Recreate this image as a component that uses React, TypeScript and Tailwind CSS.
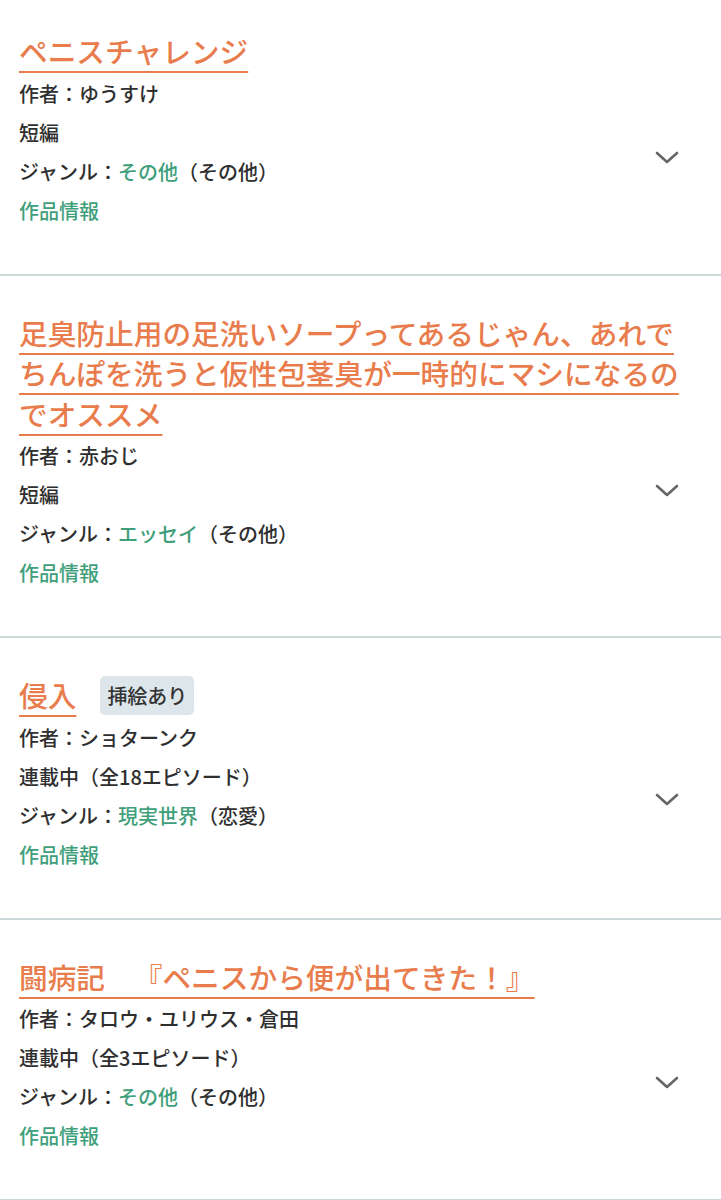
import React from "react";

type Work = {
  title: string;
  author: string;
  status: string;
  genre: string;
  subGenre: string;
  badge?: string;
  chevronTop: string;
  first?: boolean;
};

const works: Work[] = [
  {
    title: "ペニスチャレンジ",
    author: "ゆうすけ",
    status: "短編",
    genre: "その他",
    subGenre: "その他",
    chevronTop: "top-[151px]",
    first: true,
  },
  {
    title: "足臭防止用の足洗いソープってあるじゃん、あれでちんぽを洗うと仮性包茎臭が一時的にマシになるのでオススメ",
    author: "赤おじ",
    status: "短編",
    genre: "エッセイ",
    subGenre: "その他",
    chevronTop: "top-[208px]",
  },
  {
    title: "侵入",
    author: "ショターンク",
    status: "連載中（全18エピソード）",
    genre: "現実世界",
    subGenre: "恋愛",
    badge: "挿絵あり",
    chevronTop: "top-[155px]",
  },
  {
    title: "闘病記　『ペニスから便が出てきた！』",
    author: "タロウ・ユリウス・倉田",
    status: "連載中（全3エピソード）",
    genre: "その他",
    subGenre: "その他",
    chevronTop: "top-[156px]",
  },
];

function Chevron() {
  return (
    <svg width="24" height="13" viewBox="0 0 24 13" fill="none">
      <path
        d="M2 2 L12 11 L22 2"
        stroke="#666666"
        strokeWidth="2.6"
        strokeLinecap="round"
        strokeLinejoin="round"
      />
    </svg>
  );
}

function WorkCard({ work }: { work: Work }) {
  return (
    <div
      className={`relative border-b-2 border-[#cbd8da] pl-[19px] pr-[19px] pb-[44px] ${
        work.first ? "pt-[31px]" : "pt-[37px]"
      }`}
    >
      <div className="flex items-center gap-[24px] text-[28.7px] leading-[40.5px] font-medium text-[#e97c4c]">
        <span className="underline decoration-2 underline-offset-[8px] decoration-[#e97c4c]">
          {work.title}
        </span>
        {work.badge && (
          <span className="flex h-[39px] shrink-0 items-center rounded-[5px] bg-[#dce6eb] px-[7px] text-[20px] leading-[39px] font-medium text-[#333]">
            {work.badge}
          </span>
        )}
      </div>
      <div className="mt-[2px] text-[20px] leading-[39px] font-medium text-[#2f2f2f]">
        <div>作者：{work.author}</div>
        <div>{work.status}</div>
        <div>
          ジャンル：<span className="text-[#3f9f7b]">{work.genre}</span>（{work.subGenre}）
        </div>
        <div className="text-[#3f9f7b]">作品情報</div>
      </div>
      <div className={`absolute right-[42px] ${work.chevronTop}`}>
        <Chevron />
      </div>
    </div>
  );
}

export default function App() {
  return (
    <div
      className="min-h-[1200px] w-full bg-white [text-spacing-trim:space-all]"
      style={{ fontFamily: '"Noto Sans CJK JP", "Noto Sans", sans-serif' }}
    >
      {works.map((w) => (
        <WorkCard key={w.title} work={w} />
      ))}
    </div>
  );
}
